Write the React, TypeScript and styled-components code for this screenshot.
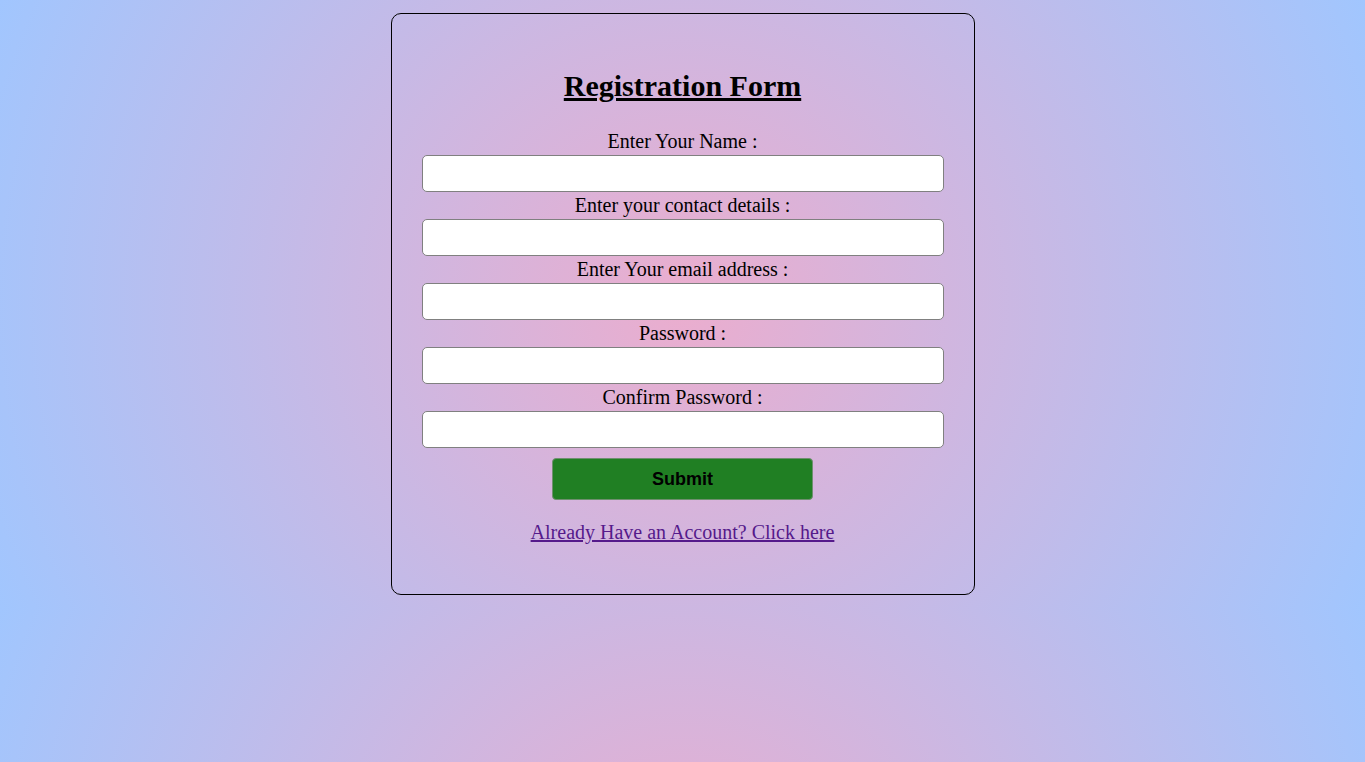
import React from "react";
import styled, { createGlobalStyle } from "styled-components";

const GlobalStyle = createGlobalStyle`
  html {
    background: radial-gradient(circle, #ebadce 0%, #a1c6fe 100%);
  }
  body {
    margin: 0;
    padding: 0;
    font-family: "Liberation Serif", "Times New Roman", serif;
  }
`;

const Card = styled.form`
  box-sizing: border-box;
  width: 584px;
  margin: 13px auto;
  padding: 30px 30px 50px;
  border: 1px solid #000;
  border-radius: 10px;
  display: flex;
  flex-direction: column;
  align-items: center;
`;

const Title = styled.h1`
  margin: 25px 0 26px;
  font-size: 30px;
  line-height: 34px;
  font-weight: bold;
  text-decoration: underline;
  color: #000;
`;

const Field = styled.div`
  width: 100%;
  display: flex;
  flex-direction: column;
  align-items: center;
`;

const Label = styled.label`
  display: block;
  padding-top: 1px;
  font-size: 20px;
  line-height: 23px;
  color: #000;
`;

const Input = styled.input`
  box-sizing: border-box;
  width: 100%;
  height: 37px;
  margin: 2px 0 1px;
  padding: 0 8px;
  border: 1px solid #808080;
  border-radius: 5px;
  background: #fff;
  font-size: 16px;
  outline: none;
`;

const Submit = styled.button`
  box-sizing: border-box;
  width: 50%;
  height: 42px;
  margin-top: 9px;
  border: 1px solid #6f8f6f;
  border-radius: 4px;
  background: #207f23;
  color: #000;
  font-family: "Liberation Sans", Arial, sans-serif;
  font-weight: bold;
  font-size: 18px;
  cursor: pointer;
`;

const LoginLink = styled.a`
  margin-top: 21px;
  font-size: 20px;
  line-height: 23px;
  color: #551a8b;
  text-decoration: underline;
`;

const fields = [
  { id: "name", label: "Enter Your Name :", type: "text" },
  { id: "contact", label: "Enter your contact details :", type: "text" },
  { id: "email", label: "Enter Your email address :", type: "email" },
  { id: "password", label: "Password :", type: "password" },
  { id: "confirm", label: "Confirm Password :", type: "password" },
];

export default function App() {
  return (
    <>
      <GlobalStyle />
      <Card onSubmit={(e) => e.preventDefault()}>
        <Title>Registration Form</Title>
        {fields.map((f) => (
          <Field key={f.id}>
            <Label htmlFor={f.id}>{f.label}</Label>
            <Input id={f.id} type={f.type} />
          </Field>
        ))}
        <Submit type="submit">Submit</Submit>
        <LoginLink href="#">Already Have an Account? Click here</LoginLink>
      </Card>
    </>
  );
}
